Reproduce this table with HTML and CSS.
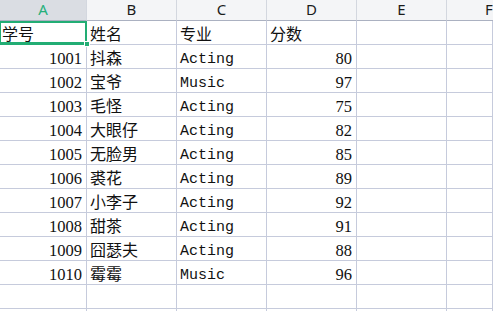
FILE: index.html
```html
<!DOCTYPE html>
<html lang="zh">
<head>
<meta charset="utf-8">
<title>Sheet</title>
<link rel="stylesheet" href="styles.css">
</head>
<body>
<div class="sheet">
  <div class="hd sel">A</div><div class="hd">B</div><div class="hd">C</div><div class="hd">D</div><div class="hd">E</div><div class="hd last">F</div>

  <div class="c zh active">学号<span class="handle"></span></div><div class="c zh">姓名</div><div class="c zh">专业</div><div class="c zh">分数</div><div class="c"></div><div class="c"></div>

  <div class="c num">1001</div><div class="c zh">抖森</div><div class="c en">Acting</div><div class="c num">80</div><div class="c"></div><div class="c"></div>
  <div class="c num">1002</div><div class="c zh">宝爷</div><div class="c en">Music</div><div class="c num">97</div><div class="c"></div><div class="c"></div>
  <div class="c num">1003</div><div class="c zh">毛怪</div><div class="c en">Acting</div><div class="c num">75</div><div class="c"></div><div class="c"></div>
  <div class="c num">1004</div><div class="c zh">大眼仔</div><div class="c en">Acting</div><div class="c num">82</div><div class="c"></div><div class="c"></div>
  <div class="c num">1005</div><div class="c zh">无脸男</div><div class="c en">Acting</div><div class="c num">85</div><div class="c"></div><div class="c"></div>
  <div class="c num">1006</div><div class="c zh">裘花</div><div class="c en">Acting</div><div class="c num">89</div><div class="c"></div><div class="c"></div>
  <div class="c num">1007</div><div class="c zh">小李子</div><div class="c en">Acting</div><div class="c num">92</div><div class="c"></div><div class="c"></div>
  <div class="c num">1008</div><div class="c zh">甜茶</div><div class="c en">Acting</div><div class="c num">91</div><div class="c"></div><div class="c"></div>
  <div class="c num">1009</div><div class="c zh">囧瑟夫</div><div class="c en">Acting</div><div class="c num">88</div><div class="c"></div><div class="c"></div>
  <div class="c num">1010</div><div class="c zh">霉霉</div><div class="c en">Music</div><div class="c num">96</div><div class="c"></div><div class="c"></div>

  <div class="c"></div><div class="c"></div><div class="c"></div><div class="c"></div><div class="c"></div><div class="c"></div>
  <div class="c"></div><div class="c"></div><div class="c"></div><div class="c"></div><div class="c"></div><div class="c"></div>
</div>
</body>
</html>
```

FILE: styles.css
```css
html, body {
  margin: 0;
  padding: 0;
  background: #ffffff;
  overflow: hidden;
}
body {
  width: 493px;
  height: 311px;
}
.sheet {
  display: grid;
  grid-template-columns: 87px 90px 90px 90px 90px 46px;
  grid-template-rows: 21px;
  grid-auto-rows: 24px;
  width: 493px;
  height: 311px;
  overflow: hidden;
}
.hd {
  box-sizing: border-box;
  background: #f4f5f7;
  border-right: 1px solid #d3d7df;
  border-bottom: 1px solid #abb1c1;
  font-family: "Noto Sans", "Liberation Sans", sans-serif;
  font-size: 15px;
  line-height: 19px;
  color: #1b1b1b;
  text-align: center;
}
.hd.last {
  text-align: left;
  padding-left: 38px;
  border-right: none;
}
.hd.sel {
  background: #dadde3;
  color: #24b07a;
}
.c {
  position: relative;
  box-sizing: border-box;
  border-right: 1px solid #c6cbdc;
  border-bottom: 1px solid #c6cbdc;
  padding: 0 4px 0 3px;
  white-space: nowrap;
  color: #111;
  line-height: 23px;
}
.zh {
  font-family: "Noto Sans CJK SC", sans-serif;
  font-size: 16px;
  line-height: 22px;
  padding-top: 1px;
}
.num {
  font-family: "Liberation Serif", serif;
  font-size: 16.5px;
  text-align: right;
  padding-top: 2px;
}
.en {
  font-family: "Liberation Mono", monospace;
  font-size: 15px;
  padding-top: 3px;
}
.active {
  padding-left: 2px;
}
.active::after {
  content: "";
  position: absolute;
  left: 0;
  top: 0;
  right: -1px;
  bottom: -1px;
  border: 2px solid #22ad74;
  border-left-width: 1px;
  border-bottom-width: 3px;
  pointer-events: none;
}
.handle {
  position: absolute;
  right: -4px;
  bottom: -3px;
  width: 6px;
  height: 6px;
  background: #22ad74;
  border: 1px solid #ffffff;
  box-sizing: border-box;
  z-index: 2;
}
```
